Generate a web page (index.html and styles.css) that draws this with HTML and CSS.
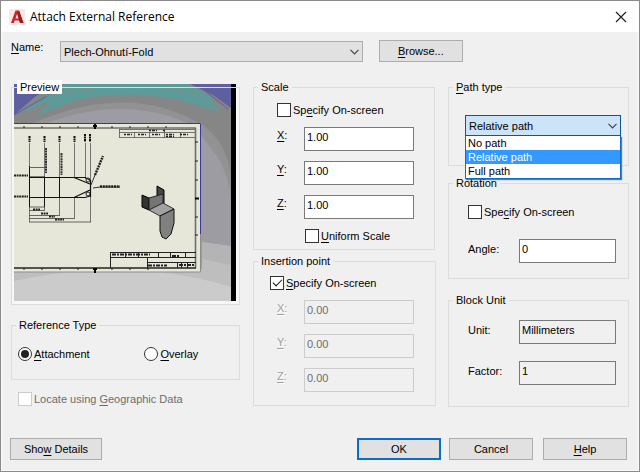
FILE: index.html
```html
<!doctype html>
<html lang="en">

<head>
  <meta charset="UTF-8" />
  <meta name="viewport" content="width=device-width, initial-scale=1.0" />
  <title>Attach External Reference</title>
  <link rel="stylesheet" href="styles.css">
</head>

<body>
  <form class="dialog">
    <header class="title-bar">
      <svg class="logo" width="16" height="16" viewBox="0 0 16 16" aria-hidden="true">
        <rect width="16" height="16" fill="#fae6e2" />
        <path d="M2 14 L6.500 1.500 H10 L14.500 14 H11 L10.200 11.500 H5.800 L4.800 14 Z M6.500 9.500 H9.600 L8.200 4.500 Z" fill="#c9252c" fill-rule="evenodd" />
        <path d="M10 1.500 L14.500 14 H11 L8.200 4.500 Z" fill="#9d1a20" />
      </svg>
      <h1>Attach External Reference</h1>
      <button class="close" type="button" aria-label="Close">
        <svg width="12" height="12" viewBox="0 0 12 12"><path d="M1 1 L11 11 M11 1 L1 11" stroke="#222" stroke-width="1.200" /></svg>
      </button>
    </header>

    <div class="name-row">
      <label for="name"><u>N</u>ame:</label>
      <div class="dropdown name-dropdown">
        <select id="name">
          <option>Plech-Ohnutí-Fold</option>
        </select>
        <svg width="9" height="6" viewBox="0 0 9 6"><path d="M.5 .8 L4.500 4.800 L8.500 .8" fill="none" stroke="#444" stroke-width="1.200" /></svg>
      </div>
      <button class="btn" type="button"><u>B</u>rowse...</button>
    </div>

    <main class="columns">
      <div class="column first">
        <fieldset class="preview">
          <legend>Preview</legend>
          <svg class="picture" viewBox="0 0 222 217" role="img" aria-label="Drawing preview">
            <!-- background rings -->
            <rect width="222" height="217" fill="#868686" />
            <path d="M0 0 H45 L22 12 L0 31 Z M176 0 H217 V24 L199 11 Z" fill="#5d5f9e" />
            <path d="M7 29 L30 12 L52 0 H174 L197 13 L205 27 L192 24 L165 16 Q110 5 60 17 L24 31 L36 17 Z" fill="#5d9b98" />
            <path d="M0 31 L40 8 M5 23 L24 10 M186 3 L214 25" fill="none" stroke="#5c5cae" />
            <path d="M32 12 Q60 5 80 4 M150 3 L180 9 L202 24" fill="none" stroke="#a17c78" stroke-dasharray="5 2" />
            <path d="M0 48 Q110 -8 190 42 Q217 63 217 100 V217 H0 Z" fill="#929294" />
            <path d="M25 42 Q110 8 180 42 L203 72 Q215 92 217 115 V217 H0 V45 Z" fill="#9d9ca3" />
            <path d="M188 158 L217 162 V217 H0 V185 H188 Z" fill="#b4b4b4" />
            <path d="M188 175 L217 181 V217 H0 V185 H188 Z" fill="#bebebe" />
            <path d="M0 197 Q90 177 160 190 Q200 197 217 203 V217 H0 Z" fill="#cbcbcb" />
            <rect x="217" width="5" height="217" fill="#000" />

            <!-- sheet -->
            <rect y="39" width="187" height="149" fill="#e6e7d8" />
            <path d="M0 39.500 H186.500 V150" fill="none" stroke="#353a9a" />
            <path d="M186.500 150 V188 H0" fill="none" stroke="#8e8e85" />
            <path d="M0 44 H182" stroke="#333" />
            <path d="M181.500 44 V184" stroke="#707070" stroke-width="1.600" />
            <path d="M0 184 H182" stroke="#222" stroke-width="1.400" />
            <path d="M10 42 v2 M28 42 v2 M46 42 v2 M64 42 v2 M98 42 v2 M116 42 v2 M134 42 v2 M152 42 v2 M10 184 v2 M28 184 v2 M46 184 v2 M64 184 v2 M98 184 v2 M116 184 v2 M134 184 v2 M181 58 h3 M181 77 h3 M181 96 h3 M181 133 h3 M181 151 h3" stroke="#222" />
            <path d="M79 42 h4 M81 40 v5 M79 185 h4 M81 184 v5 M181 114.500 h4" stroke="#000" stroke-width="2" />

            <!-- revision table -->
            <path d="M105 45.500 H181 M105 48.500 H181 M105 53.500 H181 M105.500 45 V54 M120.500 48 V54 M135.500 48 V54 M150.500 45 V54 M166.500 48 V54" fill="none" stroke="#555" stroke-width=".8" />
            <path d="M110 50.500 H178 M135 46.500 H151 M152 52.500 H164" stroke="#222" stroke-width="1.500" stroke-dasharray="2 1 3 1 1 6" />

            <!-- flat pattern -->
            <path d="M15.500 59 V138 M30.500 59 V126 M45.500 59 V131 M60.500 59 V94 M60.500 114 V134 M71.500 59 V95 M76.500 59 V138" stroke="#555" stroke-width=".8" />
            <path d="M15.500 82 V123 M30.500 93 V123 M15.500 93.500 H60 M15.500 113.500 H60 M45.500 93 V114 M15 93 H31" fill="none" stroke="#111" />
            <path d="M60 93.500 L76 100 M60 113.500 L76 106 M76.500 96 V113 M60 93.500 H71 L76 96 M60 113.500 H71 L76 112" fill="none" stroke="#111" stroke-width="1.200" />
            <circle cx="74" cy="96" r="2" fill="none" stroke="#222" />
            <circle cx="74" cy="110" r="2" fill="none" stroke="#222" />
            <path d="M15 83.500 H31 M15 123 H31 M15 126.500 H31 M15 131.500 H46 M15 134.500 H61 M15 138 H77" stroke="#444" stroke-width=".8" />
            <path d="M15.500 52 V58 M30.500 52 V58 M45.500 52 V58 M60.500 52 V58 M71 50 V58 M76 50 V58" stroke="#111" stroke-width="2" stroke-dasharray="2 .5" />
            <path d="M0 91.500 H14 M0 112.500 H14 M19 125.500 H26 M27 129.500 H34 M35 132.500 H41 M41 135.500 H50" stroke="#222" stroke-width="2" stroke-dasharray="2 .6" />
            <path d="M32 64 V89 M47.500 69 V91" stroke="#333" stroke-width="2" stroke-dasharray="2 .6" />
            <path d="M77 101 L81 91 M79 104 L86 103 H106" fill="none" stroke="#333" />
            <path d="M81 91 L89 72 M86 102.500 H106" stroke="#222" stroke-width="2.400" stroke-dasharray="2 .8" />

            <!-- bent part -->
            <path d="M128 111 L135 114 V126 L128 123 Z" fill="#343434" stroke="#000" />
            <path d="M143 102 L150 106 V121 L143 117 Z" fill="#444" stroke="#000" />
            <path d="M135 114 L149 110 V119 L135 126 Z" fill="#757575" stroke="#222" />
            <path d="M135 126 L149 119 L160 125 L146 132 Z" fill="#a2a2a2" stroke="#333" />
            <path d="M146 132 L160 125 V139 L157 150 L152 155 L148 153 L146 147 Z" fill="#808080" stroke="#111" />

            <!-- title block -->
            <path d="M96 168.500 H182 M96 173.500 H182 M96.500 168 V184 M111.500 168 V174 M124.500 168 V174 M144.500 168 V174 M156.500 168 V174 M171.500 168 V174 M133.500 173 V184 M133 178.500 H182 M163.500 178 V184 M167.500 178 V184 M173.500 178 V184" fill="none" stroke="#222" />
            <path d="M98 170.500 H136 M158 172 H166 M134 181.500 H153 M165 181 H180" stroke="#222" stroke-width="2" stroke-dasharray="4 1 2 1" />

            <path d="M0 3.500 H222" stroke="#dcdcdc" />
          </svg>
        </fieldset>

        <fieldset class="reference">
          <legend>Reference Type</legend>
          <label class="choice"><input type="radio" name="reftype" checked /><span><u>A</u>ttachment</span></label>
          <label class="choice"><input type="radio" name="reftype" /><span><u>O</u>verlay</span></label>
        </fieldset>

        <label class="choice geo"><input type="checkbox" disabled /><span>Locate using <u>G</u>eographic Data</span></label>
      </div>

      <div class="column">
        <fieldset class="scale">
          <legend>Scale</legend>
          <label class="choice indent"><input type="checkbox" /><span>Sp<u>e</u>cify On-screen</span></label>
          <div class="axis">
            <label for="scale-x"><u>X</u>:</label>
            <input type="text" id="scale-x" value="1.00" />
          </div>
          <div class="axis">
            <label for="scale-y"><u>Y</u>:</label>
            <input type="text" id="scale-y" value="1.00" />
          </div>
          <div class="axis">
            <label for="scale-z"><u>Z</u>:</label>
            <input type="text" id="scale-z" value="1.00" />
          </div>
          <label class="choice uniform"><input type="checkbox" /><span><u>U</u>niform Scale</span></label>
        </fieldset>

        <fieldset class="insertion">
          <legend>Insertion point</legend>
          <label class="choice"><input type="checkbox" checked /><span><u>S</u>pecify On-screen</span></label>
          <div class="axis disabled">
            <label for="insert-x"><u>X</u>:</label>
            <input type="text" id="insert-x" value="0.00" disabled />
          </div>
          <div class="axis disabled">
            <label for="insert-y"><u>Y</u>:</label>
            <input type="text" id="insert-y" value="0.00" disabled />
          </div>
          <div class="axis disabled">
            <label for="insert-z"><u>Z</u>:</label>
            <input type="text" id="insert-z" value="0.00" disabled />
          </div>
        </fieldset>
      </div>

      <div class="column">
        <fieldset class="path-type">
          <legend><label for="path"><u>P</u>ath type</label></legend>
          <div class="dropdown open">
            <select id="path">
              <option>No path</option>
              <option selected>Relative path</option>
              <option>Full path</option>
            </select>
            <svg width="9" height="6" viewBox="0 0 9 6"><path d="M.5 .8 L4.500 4.800 L8.500 .8" fill="none" stroke="#444" stroke-width="1.200" /></svg>
            <ul class="menu" role="listbox" aria-label="Path type">
              <li role="option">No path</li>
              <li role="option" class="selected" aria-selected="true">Relative path</li>
              <li role="option">Full path</li>
            </ul>
          </div>
        </fieldset>

        <fieldset class="rotation">
          <legend>Rotation</legend>
          <label class="choice"><input type="checkbox" /><span>Spe<u>c</u>ify On-screen</span></label>
          <div class="field">
            <label for="angle">Angle:</label>
            <input type="text" id="angle" value="0" />
          </div>
        </fieldset>

        <fieldset class="block-unit">
          <legend>Block Unit</legend>
          <div class="field">
            <label for="unit">Unit:</label>
            <input type="text" id="unit" value="Millimeters" readonly />
          </div>
          <div class="field">
            <label for="factor">Factor:</label>
            <input type="text" id="factor" value="1" readonly />
          </div>
        </fieldset>
      </div>
    </main>

    <footer class="actions">
      <button class="btn details" type="button">Sho<u>w</u> Details</button>
      <button class="btn primary" type="button">OK</button>
      <button class="btn" type="button">Cancel</button>
      <button class="btn help" type="button"><u>H</u>elp</button>
    </footer>
  </form>
</body>

</html>
```
FILE: styles.css
```css
* {
  box-sizing: border-box;
}

body {
  margin: 0;
  font-family: "Liberation Sans", Arial, sans-serif;
  font-size: 11px;
  line-height: 14px;
  color: #000;
}

u {
  text-underline-offset: 2px;
  text-decoration-thickness: 1px;
}

input,
select,
button {
  margin: 0;
  font: inherit;
  color: inherit;
}

.dialog {
  display: flex;
  flex-direction: column;
  min-height: 100vh;
  background-color: #f0f0f0;
  border: 1px solid #8a8a8a;
  box-shadow: inset 0 0 0 1px #fafafa;
}

.title-bar {
  display: flex;
  align-items: center;
  gap: 5px;
  height: 31px;
  padding: 0 12px 0 8px;
  background-color: white;
}

.title-bar h1 {
  flex: 1;
  margin: 0;
  font-family: "Open Sans", "Noto Sans", sans-serif;
  font-size: 12px;
  font-weight: 400;
}

.close {
  display: flex;
  padding: 0;
  background: none;
  border: none;
}

.name-row {
  display: flex;
  align-items: flex-start;
  gap: 16px;
  padding: 8px 10px 0;
}

.name-row label {
  min-width: 33px;
}

.name-dropdown {
  width: 49%;
  margin-top: 1px;
}

.btn {
  width: 84px;
  height: 22px;
  padding: 0;
  background-color: #e1e1e1;
  border: 1px solid #adadad;
}

.btn.primary {
  border: 2px solid #0a6cce;
}

.dropdown {
  position: relative;
}

.dropdown select {
  display: block;
  width: 100%;
  height: 21px;
  padding: 0 3px;
  appearance: none;
  background-color: #e1e1e1;
  border: 1px solid #adadad;
  border-radius: 0;
}

.dropdown > svg {
  position: absolute;
  top: 8px;
  right: 4px;
  pointer-events: none;
}

.dropdown.open select {
  background-color: #cce4f7;
  border-color: #0f559c;
}

.menu {
  position: absolute;
  top: 100%;
  left: 0;
  width: 100%;
  margin: 0;
  padding: 0;
  list-style: none;
  background-color: white;
  border: 1px solid #0a6cce;
  border-top: none;
  box-shadow: 1px 1px 1px #777;
  z-index: 1;
}

.menu li {
  padding: 1px 2px 0;
  line-height: 13px;
}

.menu .selected {
  background-color: #3399ff;
  color: white;
}

.columns {
  display: grid;
  grid-template-columns: 230fr 183fr 181fr;
  gap: 12px;
  align-items: start;
  padding: 18px 10px 0;
}

.column {
  display: flex;
  flex-direction: column;
}

.first {
  padding-right: 1px;
}

fieldset {
  --inset: 0px;
  min-width: 0;
  margin: 0;
  padding: 0 0 0 var(--inset);
  border: 1px solid #dcdcdc;
}

/* keep every legend at the frame edge, whatever the inset of the fields */
legend {
  height: 14px;
  margin-left: calc(4px - var(--inset));
  padding: 0 3px;
}

.preview {
  padding: 0 3px 3px 2px;
  background-color: #f7f7f7;
}

.preview legend {
  position: relative;
  margin-left: 3px;
  padding: 0 3px;
  background-color: white;
}

/* the picture runs up behind the legend */
.picture {
  display: block;
  width: 100%;
  margin-top: -10px;
}

.choice {
  display: flex;
  align-items: center;
  gap: 2px;
}

.choice input {
  flex: none;
  position: relative;
  width: 14px;
  height: 14px;
  appearance: none;
  background-color: white;
  border: 1px solid #333;
}

.choice input[type="checkbox"]:checked::after {
  content: "";
  position: absolute;
  top: 2px;
  left: 2px;
  width: 8px;
  height: 4px;
  border-left: 1px solid #111;
  border-bottom: 1px solid #111;
  transform: rotate(-45deg);
}

.choice input[type="radio"] {
  border-radius: 50%;
}

.choice input[type="radio"]:checked::after {
  content: "";
  position: absolute;
  inset: 2px;
  background-color: #222;
  border-radius: 50%;
}

.choice input:disabled {
  border-color: #ccc;
}

.reference {
  --inset: 6px;
  display: grid;
  grid-template-columns: 127fr 95fr;
  margin-top: 13px;
  padding: 15px 0 18px var(--inset);
}

.geo {
  margin: 12px 0 0 7px;
  color: #6d6d6d;
}

.scale,
.insertion {
  --inset: 16px;
  padding: 9px 21px 6px var(--inset);
}

.scale {
  margin-right: 1px;
}

.scale .axis {
  margin-right: -1px;
}

.insertion {
  margin-top: 4px;
  padding: 8px 21px 13px var(--inset);
}

.indent {
  margin-left: 7px;
}

.axis {
  display: grid;
  grid-template-columns: 27px 1fr;
  align-items: start;
  margin: 10px 0 0 7px;
}

.axis label {
  line-height: 16px;
}

.axis input,
.field input {
  width: 100%;
  min-width: 0;
  height: 24px;
  padding: 0 2px 4px;
  background-color: white;
  border: 1px solid #7a7a7a;
  border-radius: 0;
}

.disabled label {
  color: #a0a0a0;
  text-shadow: 1px 1px 0 white;
}

.axis input:disabled {
  color: #6d6d6d;
  background-color: #f0f0f0;
  border-color: #ccc;
}

.uniform {
  margin: 10px 0 0 35px;
}

.path-type {
  --inset: 16px;
  padding: 21px 7px 29px var(--inset);
}

.rotation {
  --inset: 19px;
  margin-top: 10px;
  padding: 15px 12px 15px var(--inset);
}

.rotation legend {
  position: relative;
  z-index: 2;
}

.rotation .field {
  margin-top: 20px;
}

.block-unit {
  --inset: 19px;
  margin-top: 14px;
  padding: 13px 12px 21px var(--inset);
}

.field {
  display: grid;
  grid-template-columns: 51px 1fr;
}

.field label {
  padding-top: 3px;
}

.block-unit .field + .field {
  margin-top: 17px;
}

.field input[readonly] {
  background-color: #f0f0f0;
}

.actions {
  display: flex;
  gap: 8px;
  margin-top: auto;
  padding: 0 12px 11px 9px;
}

.details {
  width: 92px;
  margin-right: auto;
}

.help {
  margin-left: 2px;
}
```
